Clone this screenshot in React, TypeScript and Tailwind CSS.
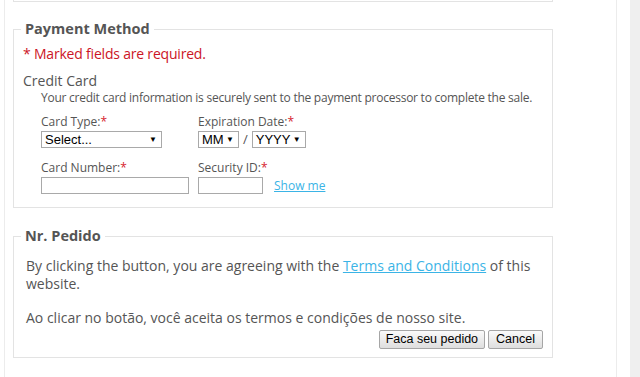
import React from 'react';

const body = { fontFamily: '"Open Sans", "DejaVu Sans", sans-serif' };
const arial = { fontFamily: '"Liberation Sans", Arial, sans-serif' };

const Req = () => <span className="text-[#d6222e]">*</span>;

const FakeSelect = ({ label, width }: { label: string; width: string }) => (
  <div
    style={arial}
    className={`${width} h-[17px] flex items-center justify-between border border-[#a9a9a9] bg-white pl-[3px] pr-[4px] text-[13px] leading-none text-black`}
  >
    <span>{label}</span>
    <span className="text-[8px]">▼</span>
  </div>
);

const App: React.FC = () => {
  return (
    <div style={body} className="w-[640px] h-[377px] bg-white overflow-hidden flex text-[#555]">
      {/* page column */}
      <div className="ml-[4px] w-[613px] border-l border-r border-[#ececec] flex flex-col">
        {/* end of the box above */}
        <div className="ml-[8px] w-[540px] h-[2px] border-l border-r border-b border-[#e3e3e3]" />

        <fieldset className="ml-[8px] mt-[18px] w-[540px] border border-[#e3e3e3] pl-[9px] pr-[10px] pb-[13px]">
          <legend className="-ml-[2px] px-[4px] text-[14.5px] font-bold leading-[18px] text-[#555]">
            Payment Method
          </legend>
          <p className="mt-[6px] text-[14px] tracking-[-0.2px] leading-[20px] text-[#cc1426]">
            * Marked fields are required.
          </p>
          <p className="mt-[8px] text-[14px] leading-[18px]">Credit Card</p>
          <div className="pl-[18px]">
            <p className="text-[12px] tracking-[-0.25px] leading-[16px] whitespace-nowrap">
              Your credit card information is securely sent to the payment processor to complete the sale.
            </p>
            <div className="mt-[7px] grid grid-cols-[157px_auto] gap-y-[11px] text-[12px]">
              <div>
                <div className="leading-[18px]">
                  Card Type:<Req />
                </div>
                <FakeSelect label="Select..." width="w-[121px]" />
              </div>
              <div>
                <div className="leading-[18px]">
                  Expiration Date:<Req />
                </div>
                <div className="flex items-center gap-[4px]">
                  <FakeSelect label="MM" width="w-[41px]" />
                  <span className="text-[13px] leading-none">/</span>
                  <FakeSelect label="YYYY" width="w-[54px]" />
                </div>
              </div>
              <div>
                <div className="leading-[18px]">
                  Card Number:<Req />
                </div>
                <div className="w-[148px] h-[17px] border border-[#a9a9a9] bg-white" />
              </div>
              <div>
                <div className="leading-[18px]">
                  Security ID:<Req />
                </div>
                <div className="flex items-center gap-[11px]">
                  <div className="w-[65px] h-[17px] border border-[#a9a9a9] bg-white" />
                  <a className="text-[#3bb4e6] underline leading-[16px]">Show me</a>
                </div>
              </div>
            </div>
          </div>
        </fieldset>

        <fieldset className="ml-[8px] mt-[19px] w-[540px] border border-[#e3e3e3] pl-[12px] pr-[9px] pb-[8px]">
          <legend className="-ml-[5px] px-[4px] text-[14.5px] font-bold leading-[18px] text-[#555]">
            Nr. Pedido
          </legend>
          <div className="mt-[12px] text-[14px] leading-[18px]">
            <p>
              By clicking the button, you are agreeing with the{' '}
              <a className="text-[#3bb4e6] underline">Terms and Conditions</a> of this website.
            </p>
            <p className="mt-[16px]">Ao clicar no botão, você aceita os termos e condições de nosso site.</p>
          </div>
          <div style={arial} className="mt-[3px] flex justify-end gap-[3px] text-[12.5px] text-black">
            <button className="h-[19px] px-[6px] border border-[#a6a6a6] rounded-[2px] bg-gradient-to-b from-[#fafafa] to-[#dedede] leading-none">
              Faca seu pedido
            </button>
            <button className="h-[19px] px-[7px] border border-[#a6a6a6] rounded-[2px] bg-gradient-to-b from-[#fafafa] to-[#dedede] leading-none">
              Cancel
            </button>
          </div>
        </fieldset>
      </div>
      {/* scrollbar track */}
      <div className="ml-[13px] w-[10px] bg-[#efefef]" />
    </div>
  );
};

export default App;
